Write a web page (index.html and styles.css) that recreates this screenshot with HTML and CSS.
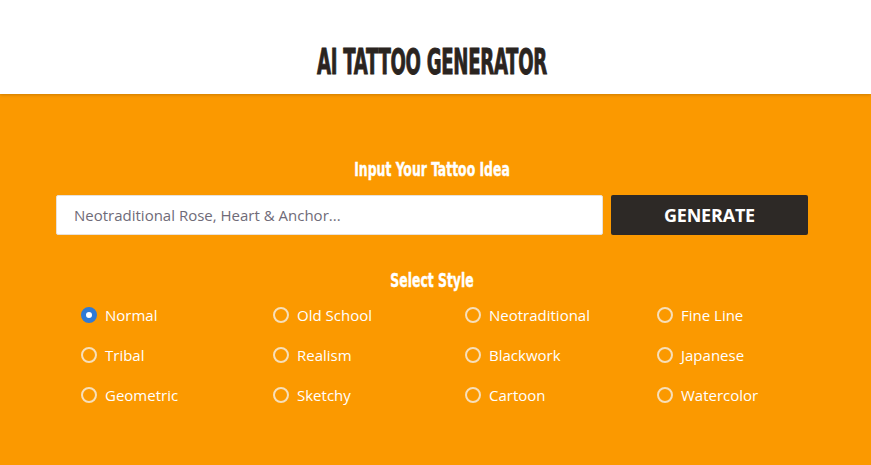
FILE: index.html
```html
<!DOCTYPE html>
<html>
<head>
<meta charset="utf-8">
<link rel="stylesheet" href="styles.css">
</head>
<body>
<header class="top">
  <div class="wrap">
    <h1 class="title">AI TATTOO GENERATOR</h1>
  </div>
</header>
<main class="panel">
  <div class="wrap">
    <h2 class="label">Input Your Tattoo Idea</h2>
    <div class="row">
      <input class="idea" type="text" placeholder="Neotraditional Rose, Heart &amp; Anchor...">
      <button class="go">GENERATE</button>
    </div>
    <h2 class="label style-label">Select Style</h2>
    <div class="styles">
      <label class="opt"><input type="radio" name="s" checked><span>Normal</span></label>
      <label class="opt"><input type="radio" name="s"><span>Old School</span></label>
      <label class="opt"><input type="radio" name="s"><span>Neotraditional</span></label>
      <label class="opt"><input type="radio" name="s"><span>Fine Line</span></label>
      <label class="opt"><input type="radio" name="s"><span>Tribal</span></label>
      <label class="opt"><input type="radio" name="s"><span>Realism</span></label>
      <label class="opt"><input type="radio" name="s"><span>Blackwork</span></label>
      <label class="opt"><input type="radio" name="s"><span>Japanese</span></label>
      <label class="opt"><input type="radio" name="s"><span>Geometric</span></label>
      <label class="opt"><input type="radio" name="s"><span>Sketchy</span></label>
      <label class="opt"><input type="radio" name="s"><span>Cartoon</span></label>
      <label class="opt"><input type="radio" name="s"><span>Watercolor</span></label>
    </div>
  </div>
</main>
</body>
</html>
```
FILE: styles.css
```css
* { box-sizing: border-box; }
html, body { margin: 0; padding: 0; }
body {
  background: #fb9900;
  font-family: "Open Sans", "Noto Sans", sans-serif;
  overflow: hidden;
  height: 465px;
}
.wrap {
  width: 752px;
  margin-left: 56px;
}
.top {
  background: #fff;
  height: 94px;
  box-shadow: 0 1px 3px rgba(0,0,0,0.18);
  position: relative;
  z-index: 1;
}
.title {
  margin: 0;
  padding-top: 44px;
  text-align: center;
  font-family: "DejaVu Sans Condensed", "DejaVu Sans", sans-serif;
  font-stretch: condensed;
  font-weight: 700;
  font-size: 35px;
  line-height: 36px;
  color: #2a2420;
  letter-spacing: -0.5px;
  -webkit-text-stroke: 0.9px #2a2420;
  transform: scaleX(0.575);
}
.panel {
  background: #fb9900;
  padding-top: 63px;
}
.label {
  margin: 0;
  text-align: center;
  color: #fff;
  font-family: "DejaVu Sans Condensed", "DejaVu Sans", sans-serif;
  font-weight: 700;
  font-size: 20px;
  line-height: 24px;
  -webkit-text-stroke: 0.4px #fff;
  transform: scaleX(0.69);
}
.row {
  display: flex;
  gap: 8px;
  margin-top: 14px;
}
.idea {
  width: 547px;
  height: 40px;
  border: 1px solid #e8e1d8;
  border-radius: 2px;
  padding: 0 17px;
  font-family: "Open Sans", "Noto Sans", sans-serif;
  font-size: 15px;
  color: #333;
  background: #fff;
  outline: none;
}
.idea::placeholder { color: #6f6b78; }
.go {
  width: 197px;
  height: 40px;
  border: 0;
  border-radius: 2px;
  background: #2d2926;
  color: #fff;
  font-family: "Open Sans", "Noto Sans", sans-serif;
  font-weight: 700;
  font-size: 18px;
  letter-spacing: -0.2px;
  padding: 0;
}
.style-label { margin-top: 33px; }
.styles {
  display: grid;
  grid-template-columns: repeat(4, 192px);
  row-gap: 16px;
  padding-left: 25px;
  margin-top: 11px;
}
.opt {
  display: flex;
  align-items: center;
  gap: 8px;
  height: 24px;
  color: #fff;
  font-size: 15px;
}
.opt input {
  appearance: none;
  -webkit-appearance: none;
  margin: 0;
  width: 16px;
  height: 16px;
  border-radius: 50%;
  border: 2px solid #f7dfb9;
  background: transparent;
  flex: none;
}
.opt input:checked {
  border: 5px solid #2f7ad6;
  background: #fff;
}
```
